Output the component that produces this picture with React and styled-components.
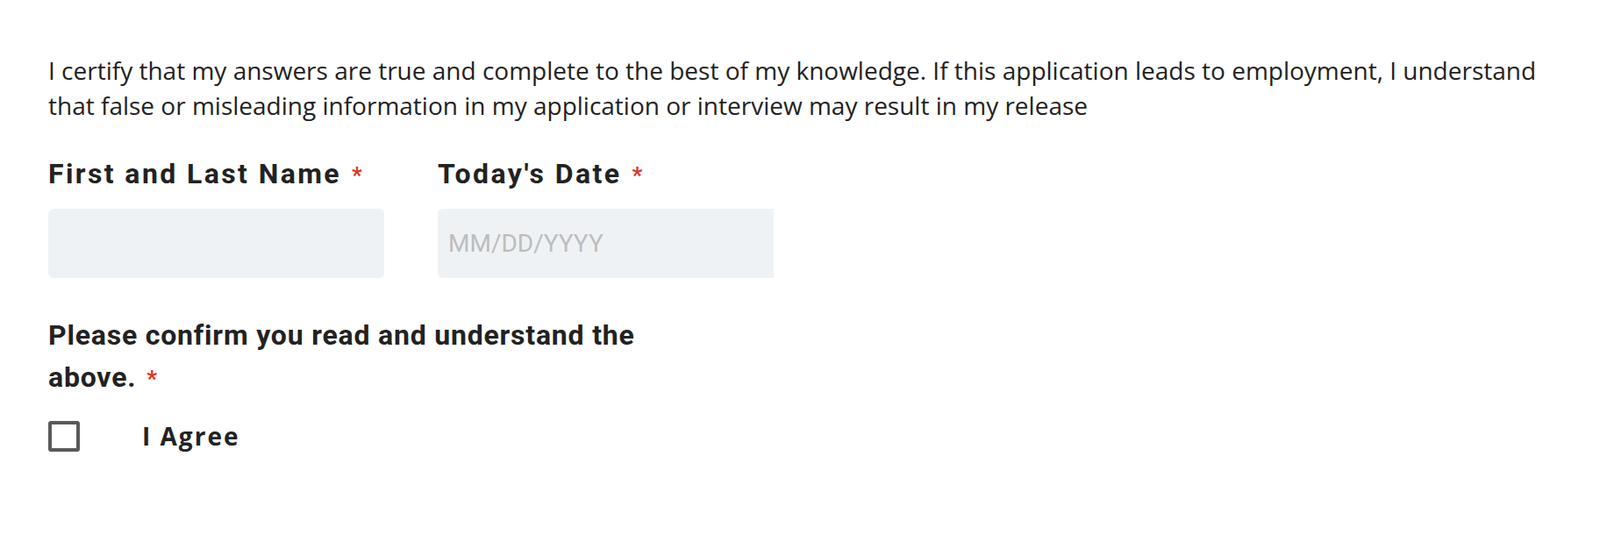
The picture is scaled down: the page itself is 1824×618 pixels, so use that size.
import React from 'react'
import styled, { createGlobalStyle } from 'styled-components'

const GlobalStyle = createGlobalStyle`
  body {
    margin: 0;
    background: #fff;
    color: #222;
  }
  * { box-sizing: border-box; }
`

const Form = styled.form`
  padding: 60px 55px 40px 55px;
`

const Notice = styled.p`
  margin: 0;
  font-family: "Open Sans", sans-serif;
  font-size: 28px;
  line-height: 40px;
  color: #222;
`

const FieldRow = styled.div`
  display: flex;
  gap: 61px;
  margin-top: 38px;
`

const Field = styled.div`
  display: flex;
  flex-direction: column;
  width: 383px;
  overflow: hidden;
`

const Label = styled.label`
  font-family: Roboto, sans-serif;
  font-weight: 700;
  font-size: 32px;
  line-height: 40px;
  letter-spacing: 2.4px;
  color: #222;
  white-space: nowrap;
`

const Required = styled.span`
  display: inline-block;
  color: #e53222;
  font-size: 26px;
  line-height: 1;
  margin-left: 12px;
  letter-spacing: 0;
`

const TextInput = styled.input`
  margin-top: 20px;
  height: 79px;
  width: ${p => (p.$clipped ? '400px' : '100%')};
  border: none;
  border-radius: 6px;
  background: #eff2f5;
  padding: 0 12px;
  font-family: Roboto, sans-serif;
  font-size: 28px;
  color: #222;
  outline: none;

  &::placeholder {
    color: #bdbdbd;
  }
`

const Question = styled.div`
  margin-top: 42px;
  max-width: 720px;
  font-family: Roboto, sans-serif;
  font-weight: 700;
  font-size: 32px;
  line-height: 47.5px;
  letter-spacing: 0.8px;
  color: #222;
`

const CheckRow = styled.label`
  display: flex;
  align-items: center;
  gap: 71px;
  margin-top: 24px;
  cursor: pointer;
`

const Box = styled.span`
  width: 36px;
  height: 35px;
  border: 4px solid #5a5a5a;
  border-radius: 3px;
  background: #fff;
`

const AgreeText = styled.span`
  font-family: "Open Sans", sans-serif;
  font-weight: 700;
  font-size: 28px;
  letter-spacing: 2px;
  color: #222;
`

export default function App() {
  return (
    <>
      <GlobalStyle />
      <Form>
        <Notice>
          I certify that my answers are true and complete to the best of my knowledge. If this application leads to employment, I understand that false or misleading information in my application or interview may result in my release
        </Notice>
        <FieldRow>
          <Field>
            <Label htmlFor="name">
              First and Last Name<Required>*</Required>
            </Label>
            <TextInput id="name" type="text" />
          </Field>
          <Field>
            <Label htmlFor="date">
              Today's Date<Required>*</Required>
            </Label>
            <TextInput id="date" type="text" placeholder="MM/DD/YYYY" $clipped />
          </Field>
        </FieldRow>
        <Question>
          Please confirm you read and understand the above.<Required>*</Required>
        </Question>
        <CheckRow>
          <Box />
          <AgreeText>I Agree</AgreeText>
        </CheckRow>
      </Form>
    </>
  )
}
